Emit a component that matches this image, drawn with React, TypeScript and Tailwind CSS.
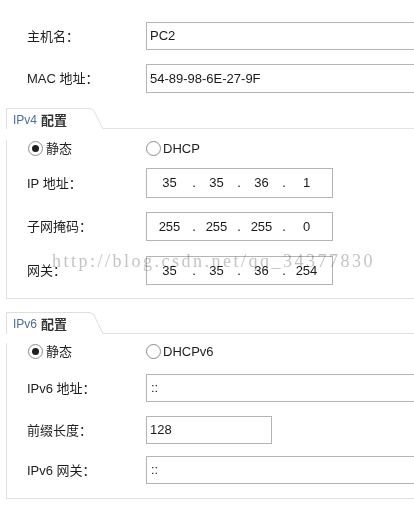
import React from "react";

const FONT = { fontFamily: '"Liberation Sans", "Noto Sans CJK SC", sans-serif' };

function Radio({ checked }: { checked?: boolean }) {
  return (
    <span className="w-[15px] h-[15px] rounded-full border border-[#8c8c8c] bg-white flex items-center justify-center shrink-0">
      {checked && <span className="w-[7px] h-[7px] rounded-full bg-[#1e1e1e]" />}
    </span>
  );
}

function Tab({ title, h }: { title: string; h: string }) {
  return (
    <div className={`flex items-end ${h}`}>
      <div className="relative w-[97px] h-full shrink-0">
        <svg className="absolute inset-0" width="97" height="100%" viewBox="0 0 97 22" preserveAspectRatio="none">
          <path d="M0.5 22 L0.5 0.5 L83 0.5 Q86 0.5 88 3 L97 22" fill="none" stroke="#dedede" strokeWidth="1" />
        </svg>
        <div className="relative pl-[7px] pt-[5px] flex items-center gap-[4px] leading-[14px]">
          <span className="text-[12px] text-[#4e6e9c]" style={{ fontFamily: '"Liberation Sans", sans-serif' }}>{title}</span>
          <span className="text-[13px] font-bold text-[#333]" style={{ fontFamily: '"Noto Sans CJK SC", sans-serif' }}>配置</span>
        </div>
      </div>
      <div className="flex-1 border-b border-[#e2e2e2]" />
    </div>
  );
}

function Label({ children }: { children: React.ReactNode }) {
  return <div className="w-[119px] shrink-0 text-[13px] text-[#1e1e1e] leading-none">{children}</div>;
}

function Row({ label, children, h, mt }: { label: React.ReactNode; children: React.ReactNode; h: string; mt: string }) {
  return (
    <div className={`flex items-center ${mt}`}>
      <Label>{label}</Label>
      <div className={`${h} flex`}>{children}</div>
    </div>
  );
}

function Box({ w, children }: { w: string; children?: React.ReactNode }) {
  return (
    <div className={`${w} h-full border border-[#b3b3b8] flex items-center text-[13px] text-[#1a1a1a] shrink-0`}>
      {children}
    </div>
  );
}

function IP({ parts }: { parts: string[] }) {
  return (
    <div className="w-[187px] h-full border border-[#b3b3b8] flex items-center text-[13px] text-[#1a1a1a] shrink-0">
      <span className="w-[45px] text-center">{parts[0]}</span>
      <span className="w-[4px] text-center">.</span>
      <span className="w-[41px] text-center">{parts[1]}</span>
      <span className="w-[4px] text-center">.</span>
      <span className="w-[41px] text-center">{parts[2]}</span>
      <span className="w-[4px] text-center">.</span>
      <span className="w-[41px] text-center">{parts[3]}</span>
    </div>
  );
}

export default function App() {
  return (
    <div className="relative w-[414px] h-[512px] bg-white overflow-hidden" style={FONT}>
      <div className="pt-[22px]">
        <div className="pl-[27px]">
          <Row label="主机名：" h="h-[28px]" mt="mt-0">
            <Box w="w-[300px]"><span className="pl-[3px]">PC2</span></Box>
          </Row>
          <Row label="MAC 地址：" h="h-[29px]" mt="mt-[14px]">
            <Box w="w-[300px]"><span className="pl-[3px]">54-89-98-6E-27-9F</span></Box>
          </Row>
        </div>

        <div className="ml-[6px] mt-[15px]">
          <Tab title="IPv4" h="h-[21px]" />
          <div className="border-l border-b border-[#e2e2e2] pl-[20px] pb-[13px]">
            <div className="flex items-center h-[16px] mt-[11px] text-[13px] text-[#1e1e1e]">
              <div className="w-[119px] flex items-center gap-[3px] pl-[1px]">
                <Radio checked />
                <span className="leading-none">静态</span>
              </div>
              <div className="flex items-center gap-[2px]">
                <Radio />
                <span className="leading-none">DHCP</span>
              </div>
            </div>
            <Row label="IP 地址：" h="h-[30px]" mt="mt-[12px]">
              <IP parts={["35", "35", "36", "1"]} />
            </Row>
            <Row label="子网掩码：" h="h-[29px]" mt="mt-[14px]">
              <IP parts={["255", "255", "255", "0"]} />
            </Row>
            <Row label="网关：" h="h-[29px]" mt="mt-[15px]">
              <IP parts={["35", "35", "36", "254"]} />
            </Row>
          </div>
        </div>

        <div className="ml-[6px] mt-[13px]">
          <Tab title="IPv6" h="h-[22px]" />
          <div className="border-l border-b border-[#e2e2e2] pl-[20px] pb-[14px]">
            <div className="flex items-center h-[16px] mt-[9px] text-[13px] text-[#1e1e1e]">
              <div className="w-[119px] flex items-center gap-[3px] pl-[1px]">
                <Radio checked />
                <span className="leading-none">静态</span>
              </div>
              <div className="flex items-center gap-[2px]">
                <Radio />
                <span className="leading-none">DHCPv6</span>
              </div>
            </div>
            <Row label="IPv6 地址：" h="h-[28px]" mt="mt-[15px]">
              <Box w="w-[300px]"><span className="pl-[4px]">::</span></Box>
            </Row>
            <Row label="前缀长度：" h="h-[28px]" mt="mt-[14px]">
              <Box w="w-[126px]"><span className="pl-[3px]">128</span></Box>
            </Row>
            <Row label="IPv6 网关：" h="h-[28px]" mt="mt-[12px]">
              <Box w="w-[300px]"><span className="pl-[4px]">::</span></Box>
            </Row>
          </div>
        </div>
      </div>

      <div
        className="absolute left-[52px] top-[252px] text-[18px] leading-[18px] tracking-[2.5px] text-[#c4c4c4] mix-blend-multiply whitespace-nowrap pointer-events-none"
        style={{ fontFamily: '"Liberation Serif", serif' }}
      >
        http://blog.csdn.net/qq_34377830
      </div>
    </div>
  );
}
